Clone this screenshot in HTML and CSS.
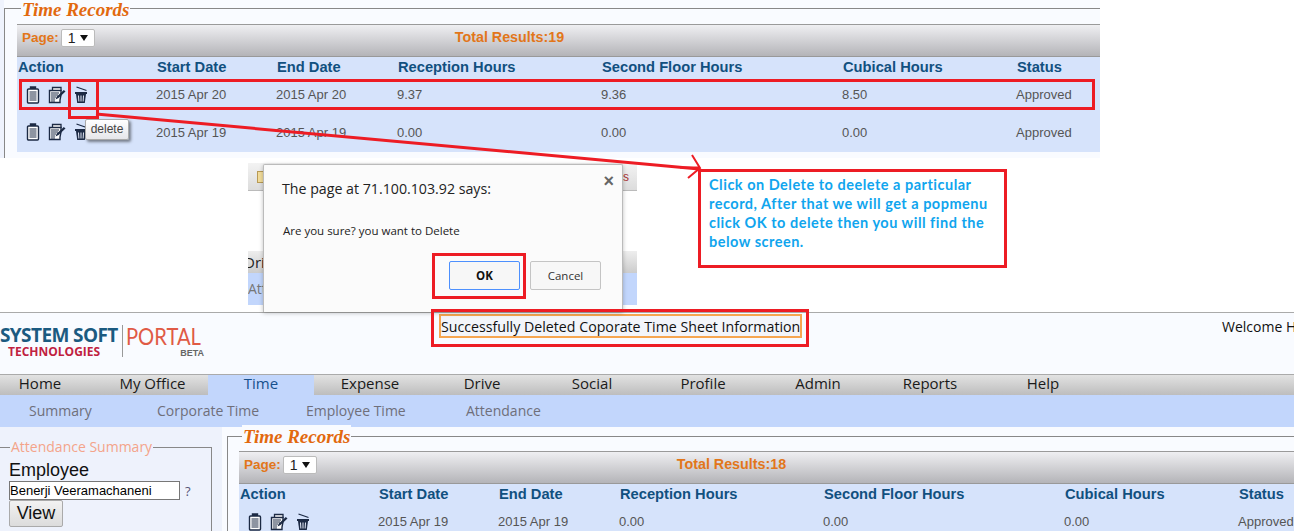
FILE: index.html
```html
<!DOCTYPE html>
<html>
  <head>
    <meta charset="utf-8">
    <meta name="viewport" content="width=device-width, initial-scale=1">
    <link rel="stylesheet" href="styles.css">
    <title>Time Records</title>
  </head>
  <body>
    <svg class="defs" width="0" height="0">
      <symbol id="i-view" viewBox="0 0 14 18">
        <path d="M4.500 2.500h5V1h-5zM2.500 3h9a1 1 0 0 1 1 1v12a1 1 0 0 1-1 1h-9a1 1 0 0 1-1-1V4a1 1 0 0 1 1-1z" fill="#fff" stroke="#1c2a44" stroke-width="1.400"/>
        <path d="M3.500 6h7M3.500 8h7M3.500 10h7M3.500 12h7M3.500 14h7" stroke="#1c2a44" stroke-width="1"/>
      </symbol>
      <symbol id="i-edit" viewBox="0 0 18 18">
        <path d="M4.500 4V1.500h8.500V5" fill="#fff" stroke="#1c2a44" stroke-width="1.300"/>
        <path d="M1.500 4.500h11.500V9l-1 5v2.500H1.500z" fill="#fff" stroke="#1c2a44" stroke-width="1.400"/>
        <path d="M3 7h8M3 9h7M3 11h5M3 13h4M3 15h4" stroke="#1c2a44" stroke-width="1"/>
        <path d="M17.500 5.500l-7 6.500-3 1.500 1.300-3 7-6.500z" fill="#1c2a44"/>
      </symbol>
      <symbol id="i-trash" viewBox="0 0 14 18">
        <path d="M2.500 1l10 3.500" stroke="#1c2a44" stroke-width="1.300"/>
        <path d="M1 6h12v2H1z" fill="#1c2a44"/>
        <path d="M2 8h10l-1.200 9H3.200z" fill="#1c2a44"/>
        <path d="M4.500 9.500l.4 6M7 9.500v6M9.500 9.500l-.4 6" stroke="#e8eefc" stroke-width="1"/>
      </symbol>
    </svg>

    <section class="top-shot">
      <div class="panel">
        <div class="panel-line"></div>
        <h2 class="panel-title">Time Records</h2>
        <div class="records">
          <div class="toolbar">
            <span class="page-label">Page:</span>
            <span class="page-select">1<i class="caret"></i></span>
            <span class="total">Total Results:19</span>
          </div>
          <div class="row head">
            <span>Action</span><span>Start Date</span><span>End Date</span><span>Reception Hours</span><span>Second Floor Hours</span><span>Cubical Hours</span><span>Status</span>
          </div>
          <div class="row data">
            <span class="icons"><svg class="ico"><use href="#i-view"/></svg><svg class="ico wide"><use href="#i-edit"/></svg><svg class="ico"><use href="#i-trash"/></svg></span>
            <span>2015 Apr 20</span><span>2015 Apr 20</span><span>9.37</span><span>9.36</span><span>8.50</span><span>Approved</span>
          </div>
          <div class="row data">
            <span class="icons"><svg class="ico"><use href="#i-view"/></svg><svg class="ico wide"><use href="#i-edit"/></svg><svg class="ico"><use href="#i-trash"/></svg></span>
            <span>2015 Apr 19</span><span>2015 Apr 19</span><span>0.00</span><span>0.00</span><span>0.00</span><span>Approved</span>
          </div>
        </div>
      </div>
    </section>

    <section class="mid-shot">
      <div class="behind">
        <div class="behind-bar"><i class="folder"></i><span class="behind-s">s</span></div>
        <div class="behind-gap"></div>
        <div class="behind-nav">Driv</div>
        <div class="behind-sub">Atte</div>
      </div>
    </section>

    <section class="portal">
      <header class="portal-head">
        <div class="logo">
          <div class="logo-left">
            <div class="logo-main">SYSTEM SOFT</div>
            <div class="logo-sub">TECHNOLOGIES</div>
          </div>
          <div class="logo-right">
            <div class="logo-portal">PORTAL</div>
            <div class="logo-beta">BETA</div>
          </div>
        </div>
        <div class="message">Successfully Deleted Coporate Time Sheet Information</div>
        <div class="welcome">Welcome H</div>
      </header>
      <nav class="nav">
        <a>Home</a><a>My Office</a><a class="active">Time</a><a>Expense</a><a>Drive</a><a>Social</a><a>Profile</a><a>Admin</a><a>Reports</a><a>Help</a>
      </nav>
      <nav class="subnav">
        <a>Summary</a><a>Corporate Time</a><a>Employee Time</a><a>Attendance</a>
      </nav>
      <div class="portal-body">
        <aside class="side">
          <div class="side-box">
            <div class="side-title">Attendance Summary</div>
            <div class="side-label">Employee</div>
            <div class="side-field"><span class="side-input">Benerji Veeramachaneni</span><span class="side-help">?</span></div>
            <button class="side-btn">View</button>
          </div>
        </aside>
        <div class="panel second">
          <div class="panel-line"></div>
          <h2 class="panel-title">Time Records</h2>
          <div class="records">
            <div class="toolbar">
              <span class="page-label">Page:</span>
              <span class="page-select">1<i class="caret"></i></span>
              <span class="total">Total Results:18</span>
            </div>
            <div class="row head">
              <span>Action</span><span>Start Date</span><span>End Date</span><span>Reception Hours</span><span>Second Floor Hours</span><span>Cubical Hours</span><span>Status</span>
            </div>
            <div class="row data">
              <span class="icons"><svg class="ico"><use href="#i-view"/></svg><svg class="ico wide"><use href="#i-edit"/></svg><svg class="ico"><use href="#i-trash"/></svg></span>
              <span>2015 Apr 19</span><span>2015 Apr 19</span><span>0.00</span><span>0.00</span><span>0.00</span><span>Approved</span>
            </div>
          </div>
        </div>
      </div>
    </section>

    <!-- things pasted on top of the screenshots -->
    <div class="dialog">
      <button class="dialog-x">&#215;</button>
      <p class="dialog-title">The page at 71.100.103.92 says:</p>
      <p class="dialog-text">Are you sure? you want to Delete</p>
      <div class="dialog-btns">
        <button class="btn ok">OK</button>
        <button class="btn">Cancel</button>
      </div>
    </div>
    <div class="tip">delete</div>
    <div class="mark mark-row"></div>
    <div class="mark mark-del"></div>
    <div class="mark mark-ok"></div>
    <div class="mark mark-msg"></div>
    <svg class="arrow" width="720" height="190">
      <path d="M96 114L699 169" fill="none" stroke="#ed1c24" stroke-width="3"/>
      <path d="M680 167.500H699M692 155L700 168L688 178" fill="none" stroke="#ed1c24" stroke-width="2"/>
    </svg>
    <div class="callout">Click on Delete to deelete a particular<br>record, After that we will get a popmenu<br>click OK to delete then you will find the<br>below screen.</div>
  </body>
</html>
```

FILE: styles.css
```css
html, body {
    margin: 0; padding: 0;
    height: 531px; overflow: hidden;
    background: #fff;
}
body {
    position: relative;
    font-family: 'Liberation Sans', Arial, sans-serif;
    font-size: 14px;
}
.defs { position: absolute; }

/* first screenshot */
.top-shot {
    width: 1100px; height: 158px;
    background: #eff3fd;
    box-sizing: border-box;
    padding-left: 4px;
    overflow: hidden;
}
.top-shot .panel { background: #f9fbff; height: 158px; }
.panel {
    position: relative;
    box-sizing: border-box;
    padding: 24px 0 0 13px;
}
.panel-line {
    position: absolute;
    left: 0; top: 8px; right: 0; bottom: 0;
    border: 1px solid #888;
    border-width: 1px 0 0 1px;
}
.panel-title {
    position: absolute;
    left: 17px; top: -2px; margin: 0;
    padding: 0 1px;
    background: #f9fbff;
    font: italic bold 19px 'Liberation Serif', serif;
    line-height: 24px;
    color: #e2690f;
}
.records { position: relative; }
.toolbar {
    display: flex; align-items: center;
    height: 33px;
    box-sizing: border-box;
    padding: 0 0 5px 5px;
    border-bottom: 1px solid #999;
    background: linear-gradient(#efeff2, #b4b4b8);
    border-top: 1px solid #9a9a9a;
}
.page-label { color: #e2761a; font-weight: bold; font-size: 13.500px; margin-bottom: 2px; }
.page-select {
    display: flex; justify-content: space-between; align-items: center;
    width: 34px; height: 18px;
    box-sizing: border-box;
    margin-left: 2px; padding: 0 6px 0 6px;
    background: #fff;
    border: 1px solid #bbb; border-radius: 2px;
    font-size: 14px; color: #222;
}
.caret {
    width: 0; height: 0;
    border: 4px solid transparent; border-top: 6px solid #111; border-bottom: 0;
}
.total {
    margin: 0 0 2px 360px;
    color: #e2761a; font-weight: bold; font-size: 14.300px;
}
.row {
    display: grid;
    grid-template-columns: 139px 120px 121px 204px 241px 174px 100px;
    background: #d6e3fb;
}
.head {
    height: 21px; align-items: center;
    box-sizing: border-box;
    padding: 0 0 2px 1px;
    font-weight: bold; font-size: 14.700px; color: #11507f;
}
.data {
    height: 38px; align-items: center;
    box-sizing: border-box;
    padding: 0 0 2px 0;
    font-size: 13px; color: #555;
}
.head + .data { height: 36px; padding-bottom: 3px; }
.icons { display: flex; align-items: center; padding-left: 9px; gap: 8px; }
.ico { width: 14px; height: 18px; }
.ico.wide { width: 18px; }

/* dialog and what is behind it */
.mid-shot {
    height: 154px;
    padding: 5px 0 0 248px;
    box-sizing: border-box;
}
.behind {
    width: 389px; height: 142px;
    background: #fff;
    overflow: hidden;
}
.behind-bar {
    height: 28px;
    background: linear-gradient(#f3f3f3, #dcdcdc);
    border-bottom: 1px solid #bbb;
    display: flex; align-items: center; justify-content: space-between;
    padding: 0 8px 0 9px; box-sizing: border-box;
    font-size: 12px;
}
.folder { width: 8px; height: 12px; background: #f2dc9a; border: 1px solid #b89a55; box-sizing: border-box; }
.behind-s { color: #a33; }
.behind-gap { height: 60px; }
.behind-nav {
    height: 22px;
    background: linear-gradient(#eee, #ccc);
    font: 15px/22px 'Open Sans', sans-serif; color: #222;
    text-indent: -4px;
}
.behind-sub {
    height: 32px; background: #c2d6fc;
    font: 14px/32px 'Open Sans', sans-serif; color: #777;
}
.dialog {
    position: absolute;
    left: 263px; top: 164px;
    width: 360px; height: 148px;
    box-sizing: border-box;
    background: #fbfbfb;
    border: 1px solid #bbb; border-bottom: 0;
    border-radius: 2px 2px 0 0;
    box-shadow: 0 1px 4px rgba(0,0,0,.25);
    padding: 13px 19px 0 18px;
    font-family: 'Open Sans', sans-serif;
    color: #222;
}
.dialog-title { margin: 0; font-size: 14.200px; line-height: 22px; }
.dialog-text { margin: 23px 0 0; padding-left: 1px; font-size: 11.500px; line-height: 16px; }
.dialog-x {
    position: absolute; right: 8px; top: 6px;
    border: 0; background: none; padding: 0;
    font: bold 18px 'Liberation Sans', sans-serif; color: #666;
}
.dialog-btns { display: flex; justify-content: flex-end; gap: 10px; margin: 22px 2px 0 0; }
.btn {
    width: 71px; height: 29px;
    box-sizing: border-box;
    background: #f7f7f7;
    border: 1px solid #c4c4c4; border-radius: 2px;
    font: 11.500px 'Open Sans', sans-serif; color: #333;
}
.btn.ok { border-color: #4d90fe; font-weight: bold; color: #111; }

/* portal */
.portal { border-top: 1px solid #aaa; background: #f9fbff; position: relative; }
.portal-head {
    height: 61px;
    display: flex; align-items: flex-start;
    position: relative;
}
.logo { display: flex; margin-top: 12px; }
.logo-left { width: 118px; }
.logo-main { font: bold 19px/20px 'Open Sans', sans-serif; color: #1b5a80; white-space: nowrap; letter-spacing: -.6px; }
.logo-sub { font: bold 12px/14px 'Open Sans', sans-serif; color: #c0213f; padding-left: 8px; white-space: nowrap; }
.logo-right { margin-left: 4px; border-left: 1px solid #999; padding-left: 3px; height: 32px; width: 78px; }
.logo-portal { font: 24px/22px 'Lato', sans-serif; color: #e05a45; transform: scaleX(.84); transform-origin: left; }
.logo-beta { font: bold 9px/12px 'Liberation Sans', sans-serif; color: #666; text-align: right; }
.message {
    position: absolute;
    left: 441px; top: 3px;
    width: 359px; height: 20px;
    background: #f3f5fa;
    font: 14.200px/22px 'Open Sans', sans-serif; color: #111;
    white-space: nowrap;
    outline: 2px solid #f6a650;
}
.welcome {
    position: absolute; left: 1222px; top: 4px;
    font: 14px/20px 'Open Sans', sans-serif; color: #111; white-space: nowrap;
}
.nav {
    display: grid;
    grid-template-columns: 97px 111px 106px 112px 112px 108px 114px 116px 108px 118px;
    height: 21px;
    box-sizing: border-box;
    background: linear-gradient(#e2e2e2, #bdbdbd);
    border-top: 1px solid #aaa;
}
.nav a {
    text-align: center;
    font: 15px/16px 'Open Sans', sans-serif; color: #1a1a1a;
}
.nav a:first-child { padding-right: 17px; }
.nav a.active { background: #c2d6fc; color: #17508c; }
.subnav {
    display: grid;
    grid-template-columns: 128px 149px 160px 120px;
    height: 32px; padding: 0 0 2px 29px;
    box-sizing: border-box;
    align-items: center;
    background: #c2d6fc;
}
.subnav a { font: 14px 'Open Sans', sans-serif; color: #6f6f7a; }
.portal-body { display: flex; height: 104px; }
.side { width: 222px; flex: none; background: #eef2fc; box-sizing: border-box; padding-top: 20px; }
.side-box {
    position: relative;
    width: 212px; height: 84px;
    box-sizing: border-box;
    border: 1px solid #888; border-width: 1px 1px 0 0;
    padding-left: 9px;
}
.side-title {
    position: absolute; left: 10px; top: -11px;
    padding: 0 1px;
    background: #eef2fc;
    font: 14px/20px 'Open Sans', sans-serif; color: #f4a48a;
}
.side-label { font-size: 18px; line-height: 21px; margin-top: 12px; color: #111; }
.side-field { display: flex; align-items: center; }
.side-input {
    width: 171px; height: 19px;
    box-sizing: border-box;
    background: #fff; border: 1px solid #777;
    font-size: 13px; line-height: 17px;
}
.side-help { margin-left: 5px; font: 13px 'Open Sans', sans-serif; color: #557; }
.side-btn {
    display: block;
    width: 54px; height: 27px;
    padding: 0;
    background: linear-gradient(#f2f2f2, #dcdcdc);
    border: 1px solid #aaa; border-radius: 2px;
    font: 18px 'Liberation Sans', sans-serif; color: #111;
}
.panel.second { flex: none; width: 1100px; margin-left: 5px; padding: 24px 0 0 12px; }
.second .panel-title { left: 15px; }
.second .panel-line { top: 9px; }

/* red marks drawn on the picture */
.mark { position: absolute; border: 3px solid #ed1c24; box-sizing: border-box; }
.mark-row { left: 19px; top: 79px; width: 1076px; height: 31px; }
.mark-del { left: 68px; top: 79px; width: 31px; height: 40px; }
.mark-ok { left: 432px; top: 253px; width: 94px; height: 46px; }
.mark-msg { left: 431px; top: 309px; width: 378px; height: 38px; }
.arrow { position: absolute; left: 0; top: 0; }
.tip {
    position: absolute;
    left: 85px; top: 119px;
    width: 44px; height: 21px;
    box-sizing: border-box;
    background: linear-gradient(#fff, #e6e6ea);
    border: 1px solid #aaa; border-radius: 2px;
    box-shadow: 2px 2px 3px rgba(0,0,0,.45);
    font: 12px/18px 'Liberation Sans', sans-serif;
    color: #444; text-align: center;
}
.callout {
    position: absolute;
    left: 698px; top: 169px;
    width: 309px; height: 99px;
    box-sizing: border-box;
    background: #fff;
    border: 3px solid #ed1c24;
    padding: 3px 0 0 8px;
    font: bold 14.500px/19px 'Lato', sans-serif;
    letter-spacing: .5px;
    white-space: nowrap;
    color: #10a5ee;
}
```
